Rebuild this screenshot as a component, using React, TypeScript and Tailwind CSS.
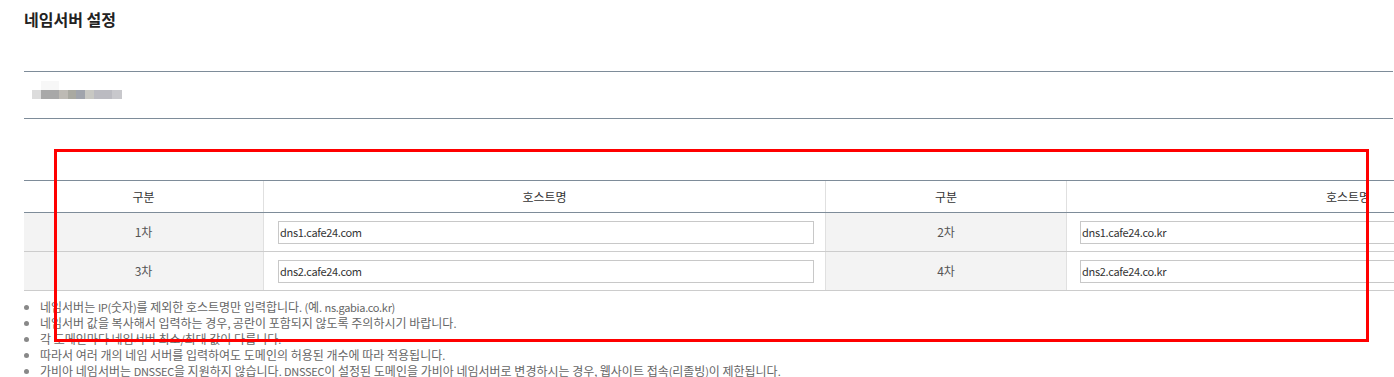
import React from "react";

const mosaic = [
  { w: 9, c: "#dcdcdc" },
  { w: 18, c: "#a8a8a8" },
  { w: 9, c: "#bdbab4" },
  { w: 8, c: "#a9a9a1" },
  { w: 9, c: "#a0a4ac" },
  { w: 9, c: "#c8c8c3" },
  { w: 18, c: "#bbbbc1" },
  { w: 10, c: "#c8c8cc" },
];

const rows = [
  { a: "1차", ha: "dns1.cafe24.com", b: "2차", hb: "dns1.cafe24.co.kr" },
  { a: "3차", ha: "dns2.cafe24.com", b: "4차", hb: "dns2.cafe24.co.kr" },
];

const notes = [
  "네임서버는 IP(숫자)를 제외한 호스트명만 입력합니다. (예. ns.gabia.co.kr)",
  "네임서버 값을 복사해서 입력하는 경우, 공란이 포함되지 않도록 주의하시기 바랍니다.",
  "각 도메인마다 네임서버 최소/최대 값이 다릅니다.",
  "따라서 여러 개의 네임 서버를 입력하여도 도메인의 허용된 개수에 따라 적용됩니다.",
  "가비아 네임서버는 DNSSEC을 지원하지 않습니다. DNSSEC이 설정된 도메인을 가비아 네임서버로 변경하시는 경우, 웹사이트 접속(리졸빙)이 제한됩니다.",
];

// latin runs are set a bit tighter so the lines keep the original widths
function Mixed({ text }: { text: string }) {
  const parts = text.split(/([A-Za-z0-9().,/]+)/);
  return (
    <>
      {parts.map((p, i) =>
        i % 2 === 1 ? (
          <span key={i} className="text-[11px] tracking-[-0.3px]">
            {p}
          </span>
        ) : (
          <React.Fragment key={i}>{p}</React.Fragment>
        )
      )}
    </>
  );
}

function HostInput({ value }: { value: string }) {
  return (
    <div className="h-[23px] border border-[#c8c8c8] bg-white pl-[1px] flex items-center text-[11px] tracking-[-0.3px] text-[#333]">
      {value}
    </div>
  );
}

export default function App() {
  return (
    <div
      className="relative w-[1394px] h-[377px] overflow-hidden bg-white"
      style={{ fontFamily: '"Noto Sans CJK KR", "Noto Sans", sans-serif' }}
    >
      {/* Title */}
      <div className="pl-[24px] pt-[9px] h-[71px]">
        <h1 className="text-[16px] font-bold text-[#222] leading-[21px]">네임서버 설정</h1>
      </div>

      {/* Domain box (masked) */}
      <div className="ml-[24px] w-[1369px] h-[48px] border-t border-b border-[#7e8c99] pl-[8px] pt-[9px]">
        <div className="flex">
          <div className="w-[9px]" />
          <div className="w-[18px] h-[9px] bg-[#f7f7f7]" />
        </div>
        <div className="flex h-[9px]">
          {mosaic.map((m, i) => (
            <div key={i} className="h-full" style={{ width: m.w, background: m.c }} />
          ))}
        </div>
      </div>

      {/* Nameserver table */}
      <div className="ml-[24px] mt-[61px] w-[1605px] text-[12px]">
        <div className="grid grid-cols-[240px_562px_241px_562px] h-[33px] border-t border-b border-[#7e8c99] text-[#333]">
          <div className="flex items-center justify-center border-r border-[#e0e0e0]">구분</div>
          <div className="flex items-center justify-center border-r border-[#e0e0e0]">호스트명</div>
          <div className="flex items-center justify-center border-r border-[#e0e0e0]">구분</div>
          <div className="flex items-center justify-center">호스트명</div>
        </div>
        {rows.map((r) => (
          <div
            key={r.a}
            className="grid grid-cols-[240px_562px_241px_562px] h-[39px] border-b border-[#cccccc] text-[#555]"
          >
            <div className="flex items-center justify-center bg-[#f3f3f3] border-r border-[#e0e0e0]">{r.a}</div>
            <div className="flex flex-col justify-center pl-[14px] pr-[11px] border-r border-[#e0e0e0]">
              <HostInput value={r.ha} />
            </div>
            <div className="flex items-center justify-center bg-[#f3f3f3] border-r border-[#e0e0e0]">{r.b}</div>
            <div className="flex flex-col justify-center pl-[13px] pr-[11px]">
              <HostInput value={r.hb} />
            </div>
          </div>
        ))}
      </div>

      {/* Notes */}
      <ul className="ml-[24px] mt-[8px] pl-[16px] list-disc text-[12px] leading-[16px] text-[#666] marker:text-[#888]">
        {notes.map((n) => (
          <li key={n}>
            <Mixed text={n} />
          </li>
        ))}
      </ul>

      {/* Red annotation frame */}
      <div className="absolute left-[54px] top-[149px] w-[1315px] h-[193px] border-[3px] border-[#ff0000] pointer-events-none" />
    </div>
  );
}
